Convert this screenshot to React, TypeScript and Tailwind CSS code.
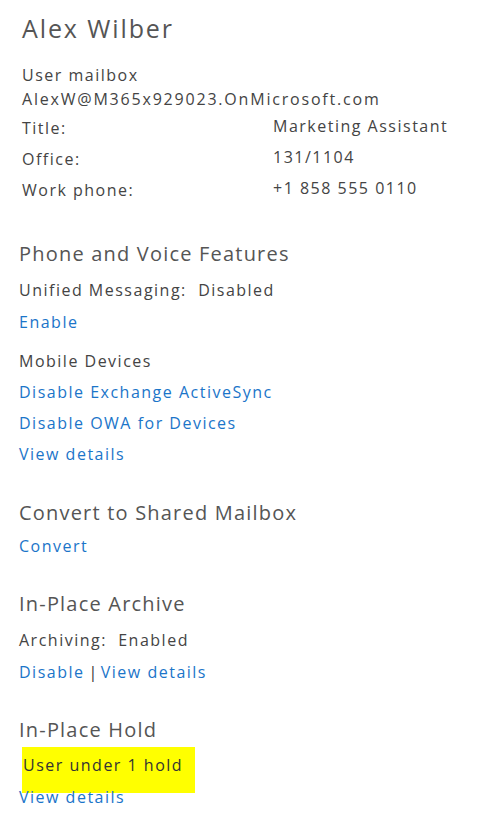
const font = { fontFamily: '"Open Sans", "Noto Sans", sans-serif' };

function Link({ children }: { children: React.ReactNode }) {
  return <span className="text-[#1b75c9]">{children}</span>;
}

export default function App() {
  return (
    <div className="w-[481px] h-[824px] bg-white text-[#444] overflow-hidden tracking-[1.5px]" style={font}>
      {/* header block */}
      <div className="pl-[22px]">
        <div className="pt-[12px] h-[44px] text-[25px] leading-[32px] tracking-[1.9px] text-[#555]">Alex Wilber</div>
        <div className="mt-[19px] h-[24px] text-[16px] leading-[24px]">User mailbox</div>
        <div className="h-[24px] text-[16px] leading-[24px] tracking-[1.8px]">AlexW@M365x929023.OnMicrosoft.com</div>
        <div className="mt-[2px] grid grid-cols-[251px_1fr] text-[16px]">
          <div className="h-[31px] leading-[31px]">Title:</div>
          <div className="h-[31px] leading-[27px]">Marketing Assistant</div>
          <div className="h-[31px] leading-[31px]">Office:</div>
          <div className="h-[31px] leading-[27px]">131/1104</div>
          <div className="h-[31px] leading-[31px]">Work phone:</div>
          <div className="h-[31px] leading-[27px]">+1 858 555 0110</div>
        </div>
      </div>

      {/* Phone and Voice */}
      <div className="pl-[19px] text-[16px]">
        <div className="mt-[33px] h-[30px] leading-[30px] text-[20px] tracking-[1.2px] text-[#555]">
          Phone and Voice Features
        </div>
        <div className="mt-[5px] h-[32px] leading-[32px]">Unified Messaging:&nbsp;&nbsp;Disabled</div>
        <div className="h-[32px] leading-[32px]">
          <Link>Enable</Link>
        </div>
        <div className="mt-[8px] h-[31px] leading-[31px]">Mobile Devices</div>
        <div className="h-[31px] leading-[31px]">
          <Link>Disable Exchange ActiveSync</Link>
        </div>
        <div className="h-[31px] leading-[31px]">
          <Link>Disable OWA for Devices</Link>
        </div>
        <div className="h-[31px] leading-[31px]">
          <Link>View details</Link>
        </div>

        {/* Shared mailbox */}
        <div className="mt-[28px] h-[30px] leading-[30px] text-[20px] tracking-[1.2px] text-[#555]">
          Convert to Shared Mailbox
        </div>
        <div className="mt-[2px] h-[32px] leading-[32px]">
          <Link>Convert</Link>
        </div>

        {/* Archive */}
        <div className="mt-[27px] h-[30px] leading-[30px] text-[20px] tracking-[1.2px] text-[#555]">In-Place Archive</div>
        <div className="mt-[5px] h-[32px] leading-[32px]">Archiving:&nbsp;&nbsp;Enabled</div>
        <div className="flex h-[32px] leading-[32px]">
          <Link>Disable</Link>
          <span className="ml-[4px] mr-[2px] text-[#333]">|</span>
          <Link>View details</Link>
        </div>

        {/* Hold */}
        <div className="mt-[27px] h-[30px] leading-[30px] text-[20px] tracking-[1.2px] text-[#555]">In-Place Hold</div>
        <div className="ml-[3px] mt-[2px] w-[173px] h-[46px] bg-[#ffff00] pl-[1px] pt-[5px] leading-[26px] text-[#333]">
          User under 1 hold
        </div>
        <div className="relative -mt-[12px] h-[32px] leading-[32px]">
          <Link>View details</Link>
        </div>
      </div>
    </div>
  );
}
